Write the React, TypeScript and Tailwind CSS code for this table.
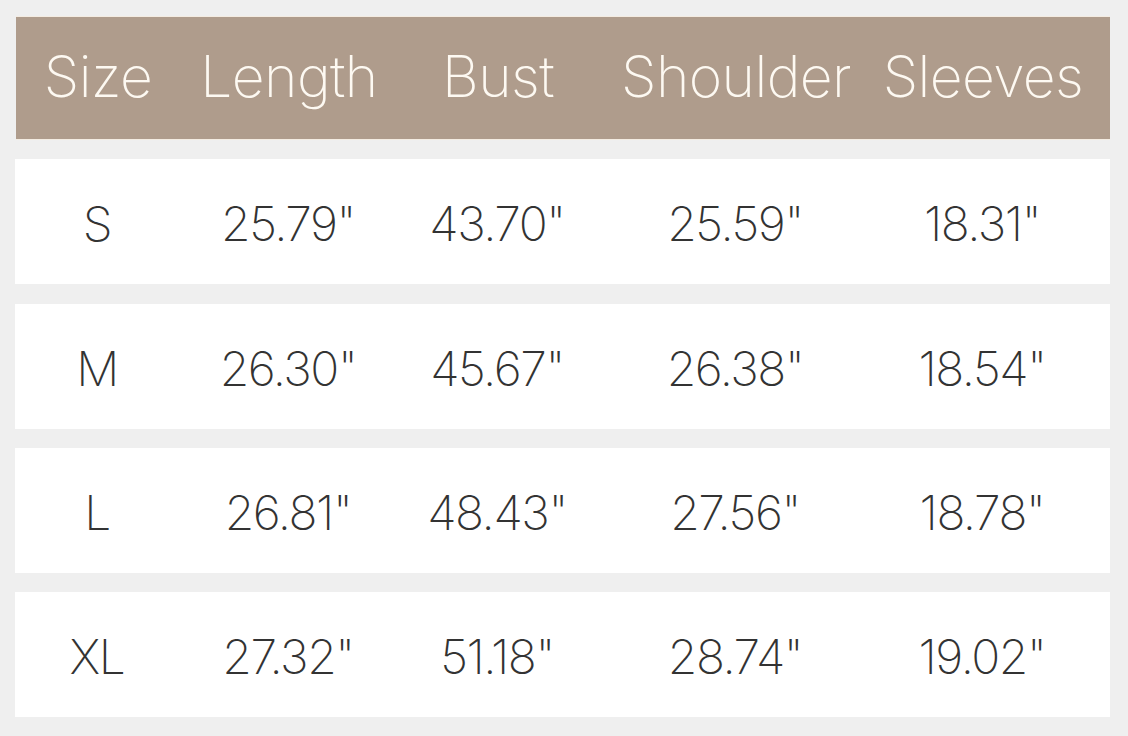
const headers = ["Size", "Length", "Bust", "Shoulder", "Sleeves"];

const rows = [
  ["S", '25.79"', '43.70"', '25.59"', '18.31"'],
  ["M", '26.30"', '45.67"', '26.38"', '18.54"'],
  ["L", '26.81"', '48.43"', '27.56"', '18.78"'],
  ["XL", '27.32"', '51.18"', '28.74"', '19.02"'],
];

const cols = "grid grid-cols-[164px_218px_200px_276px_218px] items-center";

export default function App() {
  return (
    <div
      className="w-[1128px] h-[736px] bg-[#efefef] pt-[16px] pl-[15px]"
      style={{ fontFamily: "Inter, 'Liberation Sans', sans-serif" }}
    >
      <div className="w-[1095px] flex flex-col gap-[19.33px]">
        {/* header band */}
        <div
          className={`${cols} h-[124px] ml-[1px] bg-[#af9c8c] border-y border-[#f4ece2] text-[#fdf9f2] text-[57px] font-extralight tracking-[-0.01em]`}
        >
          {headers.map((h) => (
            <div key={h} className="text-center pb-[2px]">
              {h}
            </div>
          ))}
        </div>

        {/* size rows */}
        {rows.map((row, idx) => (
          <div
            key={idx}
            className={`${cols} h-[125px] bg-white text-[#333333] text-[48px] font-extralight tracking-[-0.03em]`}
          >
            {row.map((cell, i) => (
              <div key={i} className="text-center pt-[5px]">
                {cell}
              </div>
            ))}
          </div>
        ))}
      </div>
    </div>
  );
}
